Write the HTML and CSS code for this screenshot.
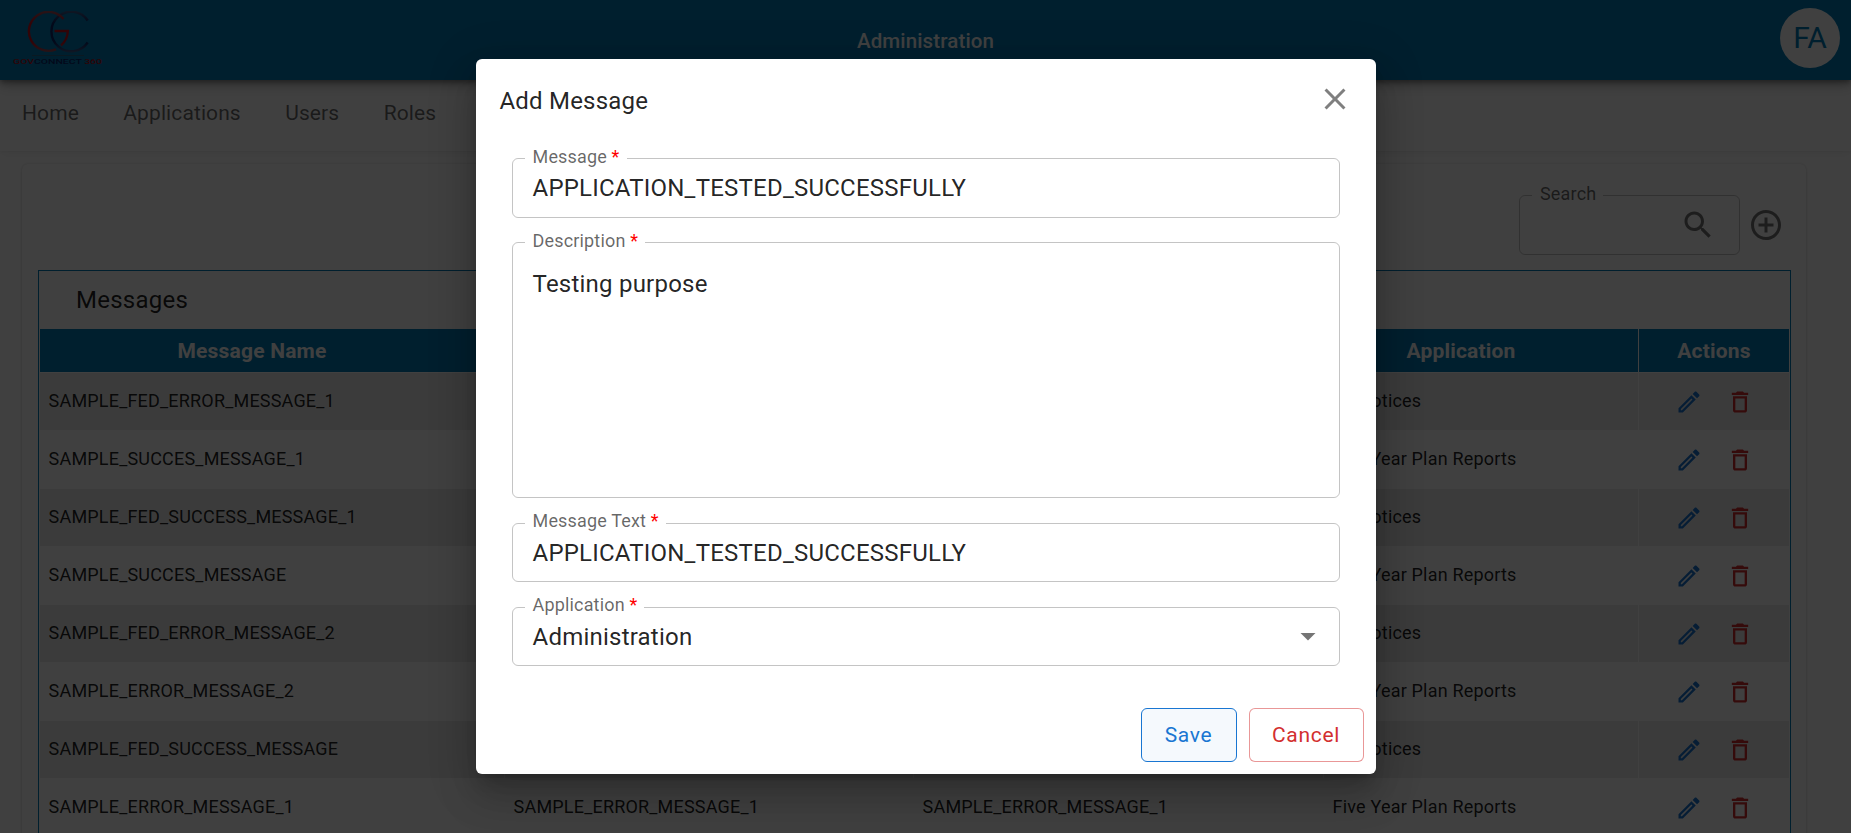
FILE: index.html
```html
<!DOCTYPE html>
<html lang="en">
<head>
<meta charset="utf-8">
<title>Administration</title>
<link rel="stylesheet" href="styles.css">
</head>
<body>
<svg class="defs" width="0" height="0">
  <symbol id="edit" viewBox="0 0 24 24"><path d="m14.06 9.02.92.92L5.92 19H5v-.92zM17.66 3c-.25 0-.51.1-.7.29l-1.83 1.83 3.75 3.75 1.83-1.83c.39-.39.39-1.02 0-1.41l-2.34-2.34c-.2-.2-.45-.29-.71-.29m-3.6 3.19L3 17.25V21h3.75L17.81 9.94z"/></symbol>
  <symbol id="delete" viewBox="0 0 24 24"><path d="M6 19c0 1.100.9 2 2 2h8c1.100 0 2-.9 2-2V7H6zM8 9h8v10H8zm7.500-5-1-1h-5l-1 1H5v2h14V4z"/></symbol>
</svg>
<div class="page">
  <header class="topbar">
    <svg class="logo" viewBox="0 0 92 58" width="92" height="58">
      <defs>
        <linearGradient id="red" gradientUnits="userSpaceOnUse" x1="0" y1="0" x2="0" y2="41"><stop offset="0" stop-color="#98505f"/><stop offset=".3" stop-color="#c8101f"/><stop offset=".75" stop-color="#c8101f"/><stop offset="1" stop-color="#98505f"/></linearGradient>
        <linearGradient id="blue" gradientUnits="userSpaceOnUse" x1="0" y1="0" x2="0" y2="41"><stop offset="0" stop-color="#405a8c"/><stop offset=".3" stop-color="#0c2468"/><stop offset=".75" stop-color="#0c2468"/><stop offset="1" stop-color="#405a8c"/></linearGradient>
      </defs>
      <g fill="none" stroke-width="2.400">
        <path d="M76.700 9.500A19.800 19.800 0 1 0 76.700 31.500" stroke="url(#blue)"/>
        <path d="M52.500 8A19.500 19.500 0 1 0 45 38.300M43.500 20H56.800A20 20 0 0 1 50 34.500" stroke="url(#red)"/>
      </g>
      <path d="M21 44.500H73" stroke="#3c5c70" stroke-width=".7"/>
      <text class="logo-text" x="2" y="53.300" textLength="89" lengthAdjust="spacingAndGlyphs"><tspan fill="#b01020">GOV</tspan><tspan fill="#0c2468">CONNECT</tspan><tspan fill="#b01020"> 360</tspan></text>
    </svg>
    <h1 class="topbar-title">Administration</h1>
    <div class="avatar">FA</div>
  </header>
  <nav class="nav">
    <a>Home</a><a>Applications</a><a>Users</a><a>Roles</a>
  </nav>
  <main class="card">
    <div class="tools">
      <div class="search">
        <span class="field-label">Search</span>
        <svg width="36" height="36" viewBox="0 0 24 24"><path d="M15.500 14h-.79l-.28-.27C15.410 12.590 16 11.110 16 9.500 16 5.910 13.090 3 9.500 3S3 5.910 3 9.500 5.910 16 9.500 16c1.610 0 3.090-.59 4.230-1.570l.27.28v.79l5 4.990L20.490 19zm-6 0C7.010 14 5 11.990 5 9.500S7.010 5 9.500 5 14 7.010 14 9.500 11.990 14 9.500 14"/></svg>
      </div>
      <svg class="add" width="36" height="36" viewBox="0 0 24 24"><path d="M13 7h-2v4H7v2h4v4h2v-4h4v-2h-4zm-1-5C6.480 2 2 6.480 2 12s4.480 10 10 10 10-4.480 10-10S17.520 2 12 2m0 18c-4.410 0-8-3.590-8-8s3.590-8 8-8 8 3.590 8 8-3.590 8-8 8"/></svg>
    </div>
    <section class="grid-box">
      <h2 class="grid-title">Messages</h2>
      <div class="grid">
        <div class="row head"><div>Message Name</div><div>Description</div><div>Message Text</div><div>Application</div><div>Actions</div></div>
        <div class="row"><div>SAMPLE_FED_ERROR_MESSAGE_1</div><div></div><div></div><div>All Notices</div><div><svg class="edit"><use href="#edit"/></svg><svg class="del"><use href="#delete"/></svg></div></div>
        <div class="row"><div>SAMPLE_SUCCES_MESSAGE_1</div><div></div><div></div><div>Five Year Plan Reports</div><div><svg class="edit"><use href="#edit"/></svg><svg class="del"><use href="#delete"/></svg></div></div>
        <div class="row"><div>SAMPLE_FED_SUCCESS_MESSAGE_1</div><div></div><div></div><div>All Notices</div><div><svg class="edit"><use href="#edit"/></svg><svg class="del"><use href="#delete"/></svg></div></div>
        <div class="row"><div>SAMPLE_SUCCES_MESSAGE</div><div></div><div></div><div>Five Year Plan Reports</div><div><svg class="edit"><use href="#edit"/></svg><svg class="del"><use href="#delete"/></svg></div></div>
        <div class="row"><div>SAMPLE_FED_ERROR_MESSAGE_2</div><div></div><div></div><div>All Notices</div><div><svg class="edit"><use href="#edit"/></svg><svg class="del"><use href="#delete"/></svg></div></div>
        <div class="row"><div>SAMPLE_ERROR_MESSAGE_2</div><div></div><div></div><div>Five Year Plan Reports</div><div><svg class="edit"><use href="#edit"/></svg><svg class="del"><use href="#delete"/></svg></div></div>
        <div class="row"><div>SAMPLE_FED_SUCCESS_MESSAGE</div><div></div><div></div><div>All Notices</div><div><svg class="edit"><use href="#edit"/></svg><svg class="del"><use href="#delete"/></svg></div></div>
        <div class="row"><div>SAMPLE_ERROR_MESSAGE_1</div><div>SAMPLE_ERROR_MESSAGE_1</div><div>SAMPLE_ERROR_MESSAGE_1</div><div>Five Year Plan Reports</div><div><svg class="edit"><use href="#edit"/></svg><svg class="del"><use href="#delete"/></svg></div></div>
      </div>
    </section>
  </main>
</div>

<div class="backdrop">
  <div class="dialog">
    <div class="dialog-head">
      <h2>Add Message</h2>
      <svg width="36" height="36" viewBox="0 0 24 24"><path d="M19 6.410 17.590 5 12 10.590 6.410 5 5 6.410 10.590 12 5 17.590 6.410 19 12 13.410 17.590 19 19 17.590 13.410 12z"/></svg>
    </div>
    <div class="form">
      <div class="field f-message"><span class="field-label">Message <i>*</i></span><span>APPLICATION_TESTED_SUCCESSFULLY</span></div>
      <div class="field f-description"><span class="field-label">Description <i>*</i></span><span>Testing purpose</span></div>
      <div class="field f-text"><span class="field-label">Message Text <i>*</i></span><span>APPLICATION_TESTED_SUCCESSFULLY</span></div>
      <div class="field f-app"><span class="field-label">Application <i>*</i></span><span>Administration</span><svg width="36" height="36" viewBox="0 0 24 24"><path d="m7 10 5 5 5-5z"/></svg></div>
    </div>
    <div class="buttons">
      <button class="btn save">Save</button>
      <button class="btn cancel">Cancel</button>
    </div>
  </div>
</div>
</body>
</html>
```

FILE: styles.css
```css
* { box-sizing: border-box; }
html, body { margin: 0; height: 100%; overflow: hidden; }
body { font-family: Roboto, "Liberation Sans", sans-serif; background: #fff; color: rgba(0,0,0,.87); }
h1, h2 { margin: 0; font-weight: 400; }
.defs { position: absolute; }
.page { height: 833px; overflow: hidden; }

.topbar {
  position: relative; z-index: 2; height: 80px; background: #007cb8; color: #fff;
  display: grid; grid-template-columns: 1fr auto 1fr; align-items: start; padding: 8px 11px 0 11px;
  box-shadow: 0 2px 4px -1px rgba(0,0,0,.2), 0 4px 5px rgba(0,0,0,.14), 0 1px 10px rgba(0,0,0,.12), 0 4px 14px rgba(0,0,0,.25);
}
.logo { margin-top: 3px; }
.logo-text { font-size: 7px; font-weight: 500; }
.topbar-title { font-size: 20.500px; line-height: 24px; font-weight: 500; margin-top: 21px; letter-spacing: .13px; }
.avatar {
  justify-self: end; width: 60px; height: 60px; border-radius: 50%; background: #fff; color: #007cb8;
  font-size: 30px; line-height: 59px; text-align: center;
}
.nav {
  height: 71px; padding: 20px 22px; display: flex; gap: 44.400px; background: #fff;
  font-size: 21px; line-height: 26px; color: rgba(0,0,0,.6); letter-spacing: .1px;
  box-shadow: 0 1px 3px rgba(0,0,0,.06), 0 3px 12px rgba(0,0,0,.04);
}
.card {
  margin: 13px 45px 0 22px; height: 760px; padding: 31px 15px 0 16px; border-radius: 6px; background: #fff;
  box-shadow: 0 0 3px rgba(0,0,0,.14), 0 1px 3px rgba(0,0,0,.08);
}
.tools { display: flex; justify-content: flex-end; align-items: center; gap: 8px; padding-right: 7px; height: 60px; }
.search {
  position: relative; width: 221px; height: 60px; border: 1px solid rgba(0,0,0,.23); border-radius: 6px;
  display: flex; align-items: center; justify-content: flex-end; padding-right: 23px;
}
.search svg, .add { fill: rgba(0,0,0,.54); }
.field-label {
  position: absolute; left: 12px; top: -13px; padding: 0 7px 0 8px; background: #fff;
  font-size: 18px; line-height: 22px; letter-spacing: .17px; color: rgba(0,0,0,.6); white-space: nowrap;
}
.field-label i { font-style: normal; color: #f00; }

.grid-box { margin-top: 15px; border: 1px solid #007cb8; height: 640px; }
.grid-title { height: 58px; padding-left: 37px; font-size: 24px; line-height: 58px; letter-spacing: .25px; }
.grid { display: grid; gap: 1px; padding: 0 1px; }
.row { display: grid; grid-template-columns: 464px 408px 409px 314px 150px; gap: 1px; height: 57px; }
.row > div {
  display: flex; align-items: center; padding: 0 8px 2px 8.600px; white-space: nowrap;
  font-size: 18px; letter-spacing: .19px; color: rgba(0,0,0,.87);
}
.row:nth-child(even) > div { background: #ececec; }
.row > div:last-child { gap: 23px; justify-content: center; padding: 0; }
.row svg { width: 28px; height: 28px; }
.edit { fill: #1976d2; }
.del { fill: #d32f2f; }
.row.head { height: 43px; }
.row.head > div { background: #007cb8; color: #fff; font-weight: 700; font-size: 21px; letter-spacing: .2px; justify-content: center; padding: 0 40px 0 0; }
.row.head > div:last-child { padding: 0; }

.backdrop { position: absolute; inset: 0; z-index: 10; background: rgba(0,0,0,.75); display: flex; align-items: center; justify-content: center; }
.dialog {
  width: 900px; height: 715px; background: #fff; border-radius: 6px; display: flex; flex-direction: column;
  box-shadow: 0 11px 15px -7px rgba(0,0,0,.2), 0 24px 38px 3px rgba(0,0,0,.14), 0 9px 46px 8px rgba(0,0,0,.12);
}
.dialog-head { height: 99px; padding: 22px 23px 0 24px; display: flex; justify-content: space-between; align-items: flex-start; }
.dialog-head h2 { font-size: 24px; line-height: 40px; letter-spacing: .2px; }
.dialog-head svg { fill: rgba(0,0,0,.5); }
.form { padding: 0 36px; display: flex; flex-direction: column; }
.field {
  position: relative; border: 1px solid rgba(0,0,0,.23); border-radius: 6px; padding: 13px 13px 0 20px;
  display: flex; justify-content: space-between; align-items: flex-start;
  font-size: 24px; line-height: 32px; letter-spacing: .225px;
}
.field svg { fill: rgba(0,0,0,.54); margin-top: -3px; }
.f-message { height: 60px; margin-bottom: 24px; }
.f-description { height: 256px; margin-bottom: 25px; padding-top: 25px; }
.f-text { height: 59px; margin-bottom: 25px; }
.f-app { height: 59px; }
.f-text .field-label, .f-app .field-label { top: -14px; }
.buttons { margin-top: 42px; padding-right: 12px; display: flex; justify-content: flex-end; gap: 12px; }
.btn {
  height: 54px; padding: 0; border-radius: 6px; background: #fff; border: 1px solid;
  font: 400 21px/30px Roboto, "Liberation Sans", sans-serif; letter-spacing: .7px;
}
.save { width: 96px; color: #1976d2; border-color: #1976d2; background: #f5f9fd; }
.cancel { width: 115px; color: #d32f2f; border-color: rgba(211,47,47,.5); }
```
